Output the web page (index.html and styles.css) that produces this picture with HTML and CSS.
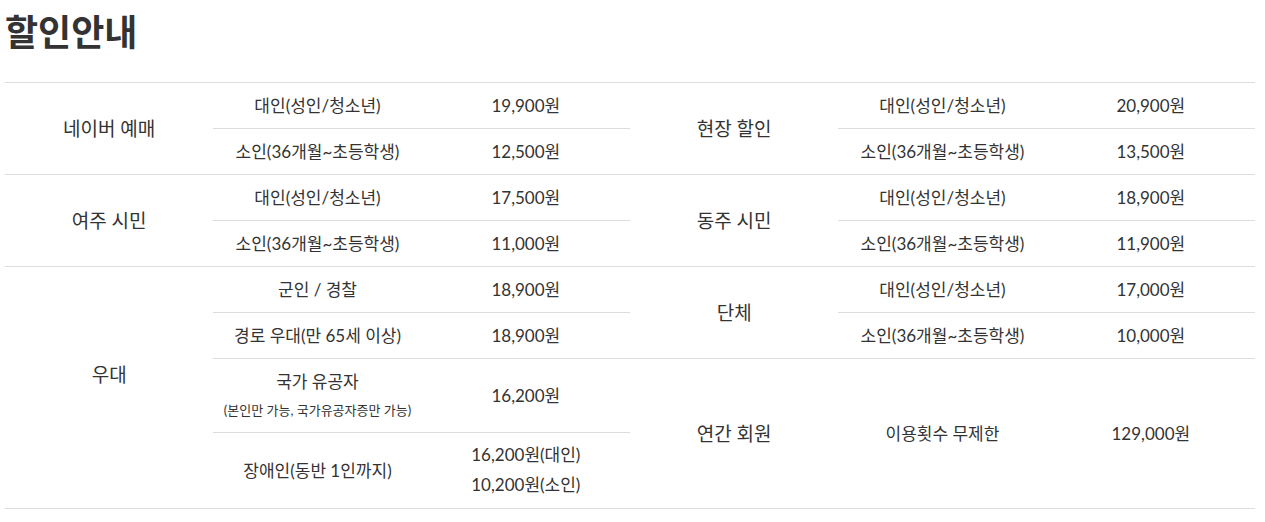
FILE: index.html
```
<!DOCTYPE html>
<html lang="ko">
<head>
    <meta charset="UTF-8">
    <meta name="viewport" content="width=device-width, initial-scale=1.0">
    <title>할인안내</title>
    <link rel="stylesheet" href="styles.css">
</head>
<body>
    <div class="wrap">
        <h2 class="title">할인안내</h2>

        <!-- 요금표: 왼쪽 3칸 / 오른쪽 3칸 -->
        <table class="price-table">
            <colgroup>
                <col><col><col><col><col><col>
            </colgroup>
            <tbody>
                <tr>
                    <td class="label" rowspan="2">네이버 예매</td>
                    <td>대인(성인/청소년)</td>
                    <td>19,900원</td>
                    <td class="label" rowspan="2">현장 할인</td>
                    <td>대인(성인/청소년)</td>
                    <td>20,900원</td>
                </tr>
                <tr>
                    <td>소인(36개월~초등학생)</td>
                    <td>12,500원</td>
                    <td>소인(36개월~초등학생)</td>
                    <td>13,500원</td>
                </tr>
                <tr>
                    <td class="label" rowspan="2">여주 시민</td>
                    <td>대인(성인/청소년)</td>
                    <td>17,500원</td>
                    <td class="label" rowspan="2">동주 시민</td>
                    <td>대인(성인/청소년)</td>
                    <td>18,900원</td>
                </tr>
                <tr>
                    <td>소인(36개월~초등학생)</td>
                    <td>11,000원</td>
                    <td>소인(36개월~초등학생)</td>
                    <td>11,900원</td>
                </tr>
                <tr>
                    <td class="label label-up" rowspan="4">우대</td>
                    <td>군인 / 경찰</td>
                    <td>18,900원</td>
                    <td class="label" rowspan="2">단체</td>
                    <td>대인(성인/청소년)</td>
                    <td>17,000원</td>
                </tr>
                <tr>
                    <td>경로 우대(만 65세 이상)</td>
                    <td>18,900원</td>
                    <td>소인(36개월~초등학생)</td>
                    <td>10,000원</td>
                </tr>
                <tr>
                    <td>
                        국가 유공자
                        <span class="note">(본인만 가능, 국가유공자증만 가능)</span>
                    </td>
                    <td>16,200원</td>
                    <td class="label" rowspan="2">연간 회원</td>
                    <td rowspan="2">이용횟수 무제한</td>
                    <td rowspan="2">129,000원</td>
                </tr>
                <tr>
                    <td>장애인(동반 1인까지)</td>
                    <td class="two-line">16,200원(대인)<br>10,200원(소인)</td>
                </tr>
            </tbody>
        </table>
    </div>
</body>
</html>
```

FILE: styles.css
```
body {
    margin: 0;
    font-family: Lato, "Noto Sans CJK KR", sans-serif;
    color: #333;
    background: #fff;
}
.wrap {
    padding: 0 10px 0 5px;
}
.title {
    margin: 10px 0 32px 0;
    font-family: "Noto Sans CJK KR", sans-serif;
    font-size: 36px;
    line-height: 40px;
    font-weight: 700;
    color: #333;
}
.price-table {
    width: 100%;
    table-layout: fixed;
    border-collapse: collapse;
    border-top: 1px solid #ddd;
}
.price-table td {
    padding: 10px 0;
    border-bottom: 1px solid #ddd;
    text-align: center;
    vertical-align: middle;
    font-size: 17px;
    line-height: 25px;
}
.price-table td.label {
    font-size: 19px;
}
.price-table td.label-up {
    padding-bottom: 36px;
}
.note {
    display: block;
    margin-top: 5px;
    font-size: 13px;
    line-height: 23px;
}
.price-table td.two-line {
    padding: 7px 0 8px 0;
    line-height: 30px;
}
```
